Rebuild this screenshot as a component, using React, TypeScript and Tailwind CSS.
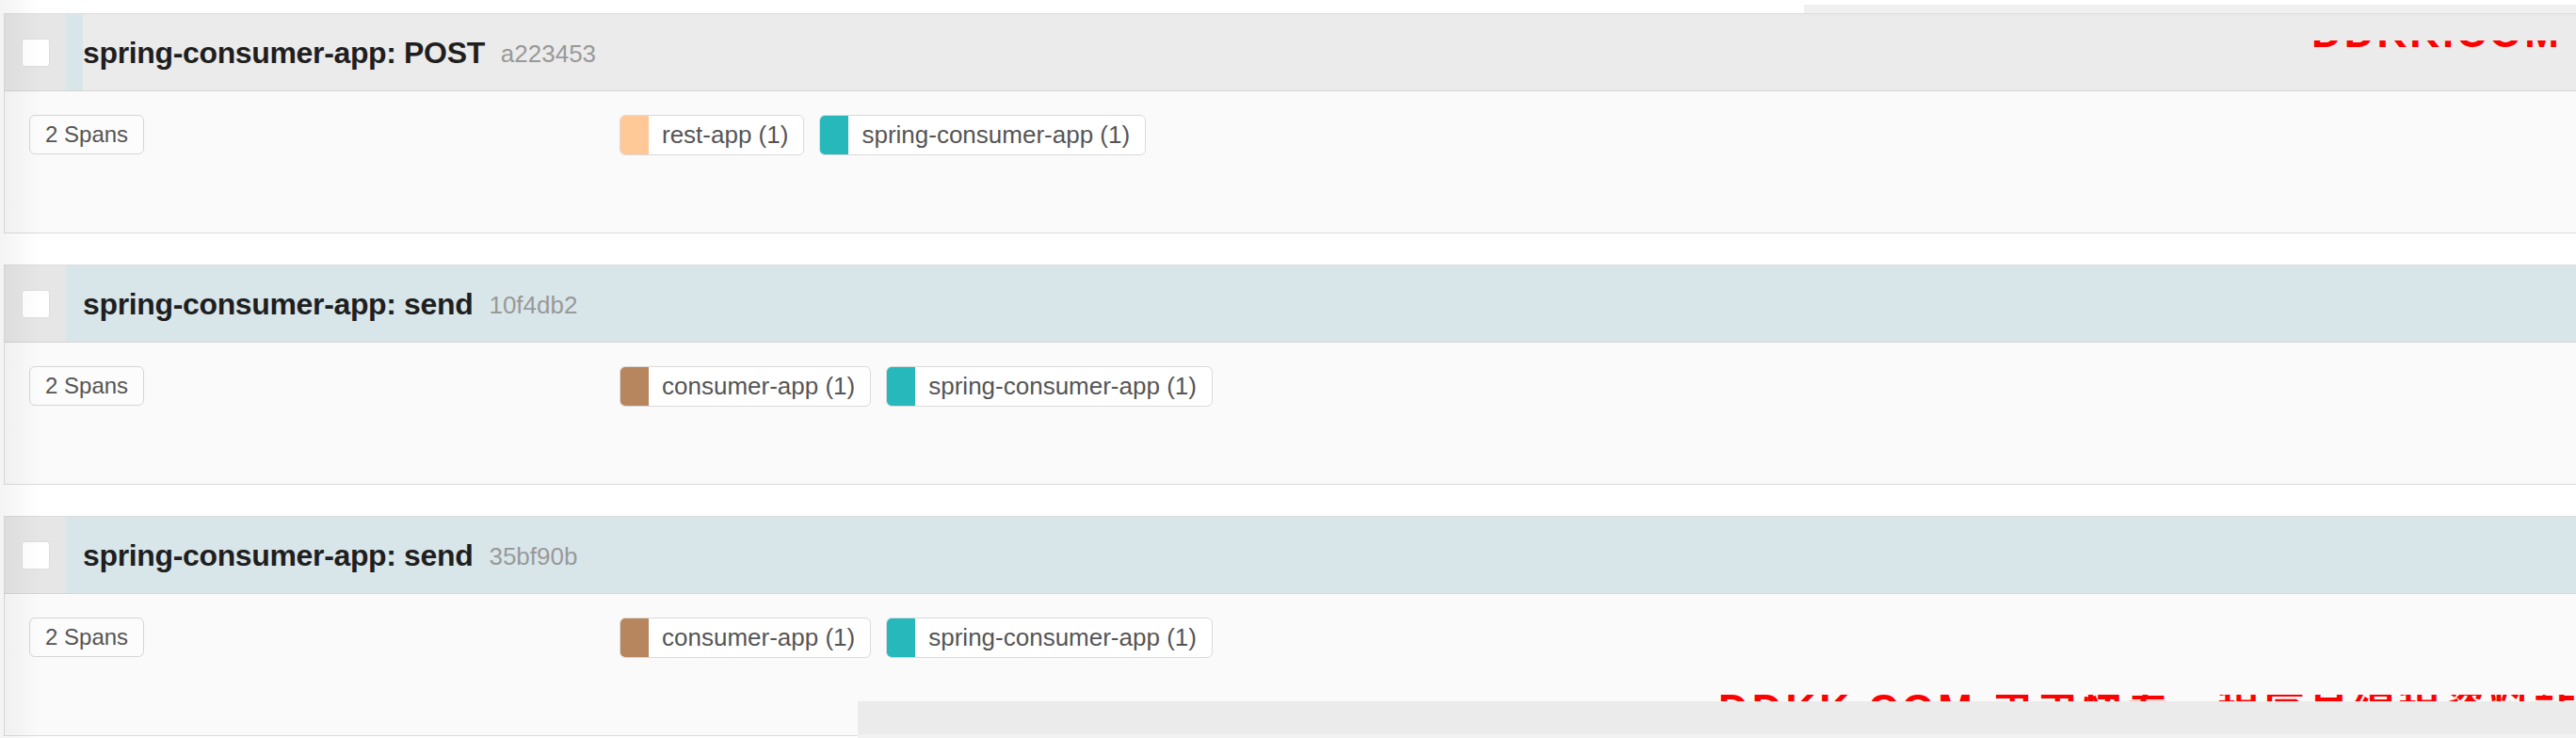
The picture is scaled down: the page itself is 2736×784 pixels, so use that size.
import React from 'react';

type Chip = { name: string; count: number; color: string };

interface Trace {
  id: string;
  title: string;
  hash: string;
  highlight: boolean;
  spans: number;
  chips: Chip[];
}

const traces: Trace[] = [
  {
    id: 't1',
    title: 'spring-consumer-app: POST',
    hash: 'a223453',
    highlight: false,
    spans: 2,
    chips: [
      { name: 'rest-app', count: 1, color: 'bg-[#ffc896]' },
      { name: 'spring-consumer-app', count: 1, color: 'bg-[#27b8bc]' },
    ],
  },
  {
    id: 't2',
    title: 'spring-consumer-app: send',
    hash: '10f4db2',
    highlight: true,
    spans: 2,
    chips: [
      { name: 'consumer-app', count: 1, color: 'bg-[#b8865e]' },
      { name: 'spring-consumer-app', count: 1, color: 'bg-[#27b8bc]' },
    ],
  },
  {
    id: 't3',
    title: 'spring-consumer-app: send',
    hash: '35bf90b',
    highlight: true,
    spans: 2,
    chips: [
      { name: 'consumer-app', count: 1, color: 'bg-[#b8865e]' },
      { name: 'spring-consumer-app', count: 1, color: 'bg-[#27b8bc]' },
    ],
  },
];

const ServiceChip: React.FC<{ chip: Chip }> = ({ chip }) => (
  <div className="flex h-[43px] items-stretch rounded-[6px] border border-[#dadada] bg-white">
    <span className={`w-[30px] rounded-l-[5px] ${chip.color}`} />
    <span className="flex items-center pl-[14px] pr-[16px] text-[26px] text-[#555]">
      {chip.name} ({chip.count})
    </span>
  </div>
);

const TraceCard: React.FC<{ trace: Trace }> = ({ trace }) => (
  <div className="mb-[33px] border border-r-0 border-[#dcdcdc]">
    <div className="flex h-[82px] border-b border-[#d4d4d4]">
      <div className="flex w-[65px] items-center justify-center bg-[#e6e6e6]">
        <span className="h-[30px] w-[30px] rounded-[3px] border border-[#dedede] bg-white" />
      </div>
      {!trace.highlight && <div className="w-[18px] bg-[#d8e6ea]" />}
      <div
        className={`flex flex-1 items-center gap-[17px] ${
          trace.highlight ? 'bg-[#d8e6ea] pl-[18px]' : 'bg-[#ebebeb]'
        }`}
      >
        <span className="text-[32px] font-bold tracking-[-0.35px] text-[#1f1f1f]">{trace.title}</span>
        <span className="pt-[4px] text-[26px] text-[#999]">{trace.hash}</span>
      </div>
    </div>
    <div className="flex h-[150px] items-start bg-[#fafafa] pl-[26px] pt-[25px]">
      <div className="w-[627px]">
        <span className="inline-flex h-[42px] items-center rounded-[6px] border border-[#d6d6d6] bg-[#fcfcfc] px-[16px] text-[24px] text-[#555]">
          {trace.spans} Spans
        </span>
      </div>
      <div className="flex gap-[16px]">
        {trace.chips.map((c) => (
          <ServiceChip key={c.name} chip={c} />
        ))}
      </div>
    </div>
  </div>
);

export default function App() {
  return (
    <div
      className="relative h-[784px] w-full overflow-hidden bg-white pl-[4px] pt-[14px]"
      style={{ fontFamily: '"Liberation Sans", Arial, "Noto Sans CJK SC", sans-serif' }}
    >
      {traces.map((t) => (
        <TraceCard key={t.id} trace={t} />
      ))}

      {/* soft shade along the left edge */}
      <div className="pointer-events-none absolute left-0 top-0 h-full w-[44px] bg-linear-to-r from-black/[0.045] to-transparent" />

      {/* watermark remnants */}
      <div className="absolute left-[1916px] top-[5px] h-[9px] w-[820px] bg-[#f0f0f0]" />
      <div aria-hidden className="absolute left-[2455px] top-[43px] h-[7px] w-[281px] overflow-hidden">
        <span className="absolute bottom-[-7px] left-0 whitespace-nowrap text-[44px] font-bold leading-none tracking-[3px] text-[#ff0000]">
          DDKK.COM
        </span>
      </div>
      <div aria-hidden className="absolute left-[1825px] top-[738px] h-[7px] w-[911px] overflow-hidden">
        <span className="absolute left-0 top-[-6px] whitespace-nowrap text-[44px] font-bold leading-none tracking-[4px] text-[#ff0000]">
          DDKK.COM 弟弟快看，程序员编程资料站
        </span>
      </div>
      <div className="absolute left-[911px] top-[745px] flex h-[39px] w-[1825px] flex-col">
        <div className="flex-1 bg-[#ebebeb]" />
        <div className="h-[4px] bg-[#f2f2f2]" />
      </div>
    </div>
  );
}
